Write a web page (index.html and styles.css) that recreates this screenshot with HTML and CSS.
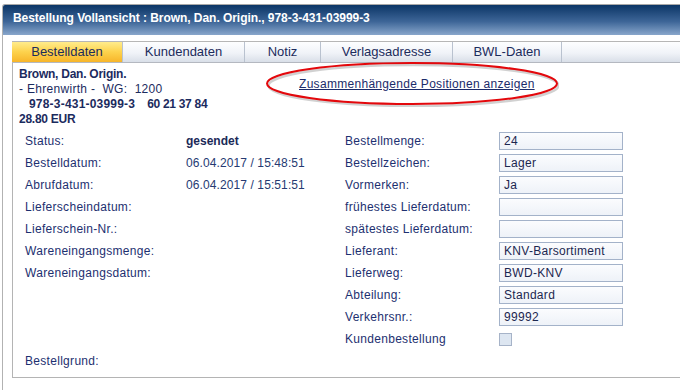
FILE: index.html
```html
<!DOCTYPE html>
<html lang="de">
<head>
  <meta charset="UTF-8" />
  <title>Bestellung Vollansicht</title>
  <link rel="stylesheet" href="styles.css">
</head>
<body>
  <div class="window">
    <div class="titlebar">Bestellung Vollansicht : Brown, Dan. Origin., 978-3-431-03999-3</div>

    <div class="window-body">
      <div class="tabs">
        <div class="tab active">Bestelldaten</div>
        <div class="tab">Kundendaten</div>
        <div class="tab">Notiz</div>
        <div class="tab">Verlagsadresse</div>
        <div class="tab">BWL-Daten</div>
        <div class="tab-rest"></div>
      </div>

      <div class="panel">
        <div class="head">
          <div class="info">
            <div class="strong">Brown, Dan. Origin.</div>
            <div class="pre">- Ehrenwirth -  WG:  1200</div>
            <div class="strong ids"><span>978-3-431-03999-3</span><span class="ids-nr">60 21 37 84</span></div>
            <div class="strong">28.80 EUR</div>
          </div>
          <div class="related">
            <svg class="mark" width="294" height="46" viewBox="0 0 294 46">
              <ellipse cx="148.5" cy="24.5" rx="145" ry="20.5" fill="none" stroke="#9a9a9a" stroke-opacity="0.45" stroke-width="2.5"/>
              <ellipse cx="147" cy="22.5" rx="145" ry="20.5" fill="none" stroke="#e3080c" stroke-width="2"/>
            </svg>
            <a href="#">Zusammenhängende Positionen anzeigen</a>
          </div>
        </div>

        <div class="fields">
          <div class="col col-left">
            <div class="row"><span class="label">Status:</span><span class="value bold">gesendet</span></div>
            <div class="row"><span class="label">Bestelldatum:</span><span class="value">06.04.2017 / 15:48:51</span></div>
            <div class="row"><span class="label">Abrufdatum:</span><span class="value">06.04.2017 / 15:51:51</span></div>
            <div class="row"><span class="label">Lieferscheindatum:</span></div>
            <div class="row"><span class="label">Lieferschein-Nr.:</span></div>
            <div class="row"><span class="label">Wareneingangsmenge:</span></div>
            <div class="row"><span class="label">Wareneingangsdatum:</span></div>
          </div>
          <div class="col col-right">
            <div class="row"><span class="label">Bestellmenge:</span><span class="box">24</span></div>
            <div class="row"><span class="label">Bestellzeichen:</span><span class="box">Lager</span></div>
            <div class="row"><span class="label">Vormerken:</span><span class="box">Ja</span></div>
            <div class="row"><span class="label">frühestes Lieferdatum:</span><span class="box"></span></div>
            <div class="row"><span class="label">spätestes Lieferdatum:</span><span class="box"></span></div>
            <div class="row"><span class="label">Lieferant:</span><span class="box">KNV-Barsortiment</span></div>
            <div class="row"><span class="label">Lieferweg:</span><span class="box">BWD-KNV</span></div>
            <div class="row"><span class="label">Abteilung:</span><span class="box">Standard</span></div>
            <div class="row"><span class="label">Verkehrsnr.:</span><span class="box">99992</span></div>
            <div class="row"><span class="label">Kundenbestellung</span><span class="check"></span></div>
          </div>
        </div>

        <div class="row reason"><span class="label">Bestellgrund:</span></div>
      </div>
    </div>
  </div>
</body>
</html>
```

FILE: styles.css
```css
body {
  margin: 0;
  padding: 0;
  background: #fff;
  font-family: 'Liberation Sans', Arial, sans-serif;
  font-size: 12px;
  color: #1d3070;
  overflow: hidden;
  height: 390px;
}

.window {
  width: 720px;
  margin: 4px 0 0 2px;
  border-left: 1px solid #b2b2b2;
  border-top: 1px solid #a8a8a8;
  border-top-left-radius: 3px;
  height: 400px;
}

.titlebar {
  height: 30px;
  line-height: 26px;
  padding-left: 10px;
  background: linear-gradient(#0b3566, #3d6597 55%, #88a6cb);
  color: #fff;
  font-weight: bold;
  font-size: 12px;
  letter-spacing: -0.05px;
  border-top-left-radius: 2px;
}

.window-body {
  padding: 6px 0 0 9px;
}

.tabs {
  display: grid;
  grid-template-columns: 111px 122px 76px 132px 109px 1fr;
  height: 20px;
  border-top: 1px solid #b6b6b6;
  border-bottom: 1px solid #b4b8c0;
  background: linear-gradient(#fdfeff, #f0f3f8 55%, #d9dfe8);
}

.tab {
  font-size: 13px;
  line-height: 20px;
  text-align: center;
  color: #1c2c5c;
  border-right: 1px solid #b9c2cf;
}

.tab.active {
  background: linear-gradient(#ffec8c, #fdd24c 50%, #f7b52a);
}

.panel {
  border-left: 1px solid #b4b4b4;
  border-bottom: 1px solid #b4b4b4;
  padding-bottom: 5px;
  letter-spacing: 0.3px;
}

.head {
  display: flex;
  padding: 4px 0 0 6px;
}

.info {
  width: 280px;
  line-height: 15px;
  color: #1b2b5e;
}

.strong {
  font-weight: bold;
  letter-spacing: -0.25px;
}

.pre {
  white-space: pre;
}

.ids {
  padding-left: 10px;
  letter-spacing: 0.2px;
}

.ids-nr {
  margin-left: 12px;
  letter-spacing: -0.3px;
}

.related {
  position: relative;
  padding-top: 10px;
  line-height: 15px;
}

.related a {
  position: relative;
  color: #1b2b6a;
}

.mark {
  position: absolute;
  left: -34px;
  top: -6px;
}

.fields {
  display: flex;
  margin-top: 3px;
  padding-left: 12px;
}

.col-left {
  width: 320px;
}

.row {
  display: flex;
  align-items: center;
  height: 22px;
}

.col-left .label,
.reason .label {
  width: 161px;
}

.col-right .label {
  width: 154px;
}

.value {
  color: #263a72;
  letter-spacing: 0.1px;
}

.value.bold {
  font-weight: bold;
  letter-spacing: 0;
  color: #1b2a58;
}

.box {
  box-sizing: border-box;
  width: 124px;
  height: 18px;
  line-height: 16px;
  padding-left: 4px;
  border: 1px solid #a3b2c9;
  background: linear-gradient(#fbfcfe, #eef2f8);
  color: #1c2750;
}

.check {
  box-sizing: border-box;
  width: 13px;
  height: 13px;
  border: 1px solid #a6b3c8;
  background: #dde6f1;
}

.reason {
  padding-left: 12px;
}
```
